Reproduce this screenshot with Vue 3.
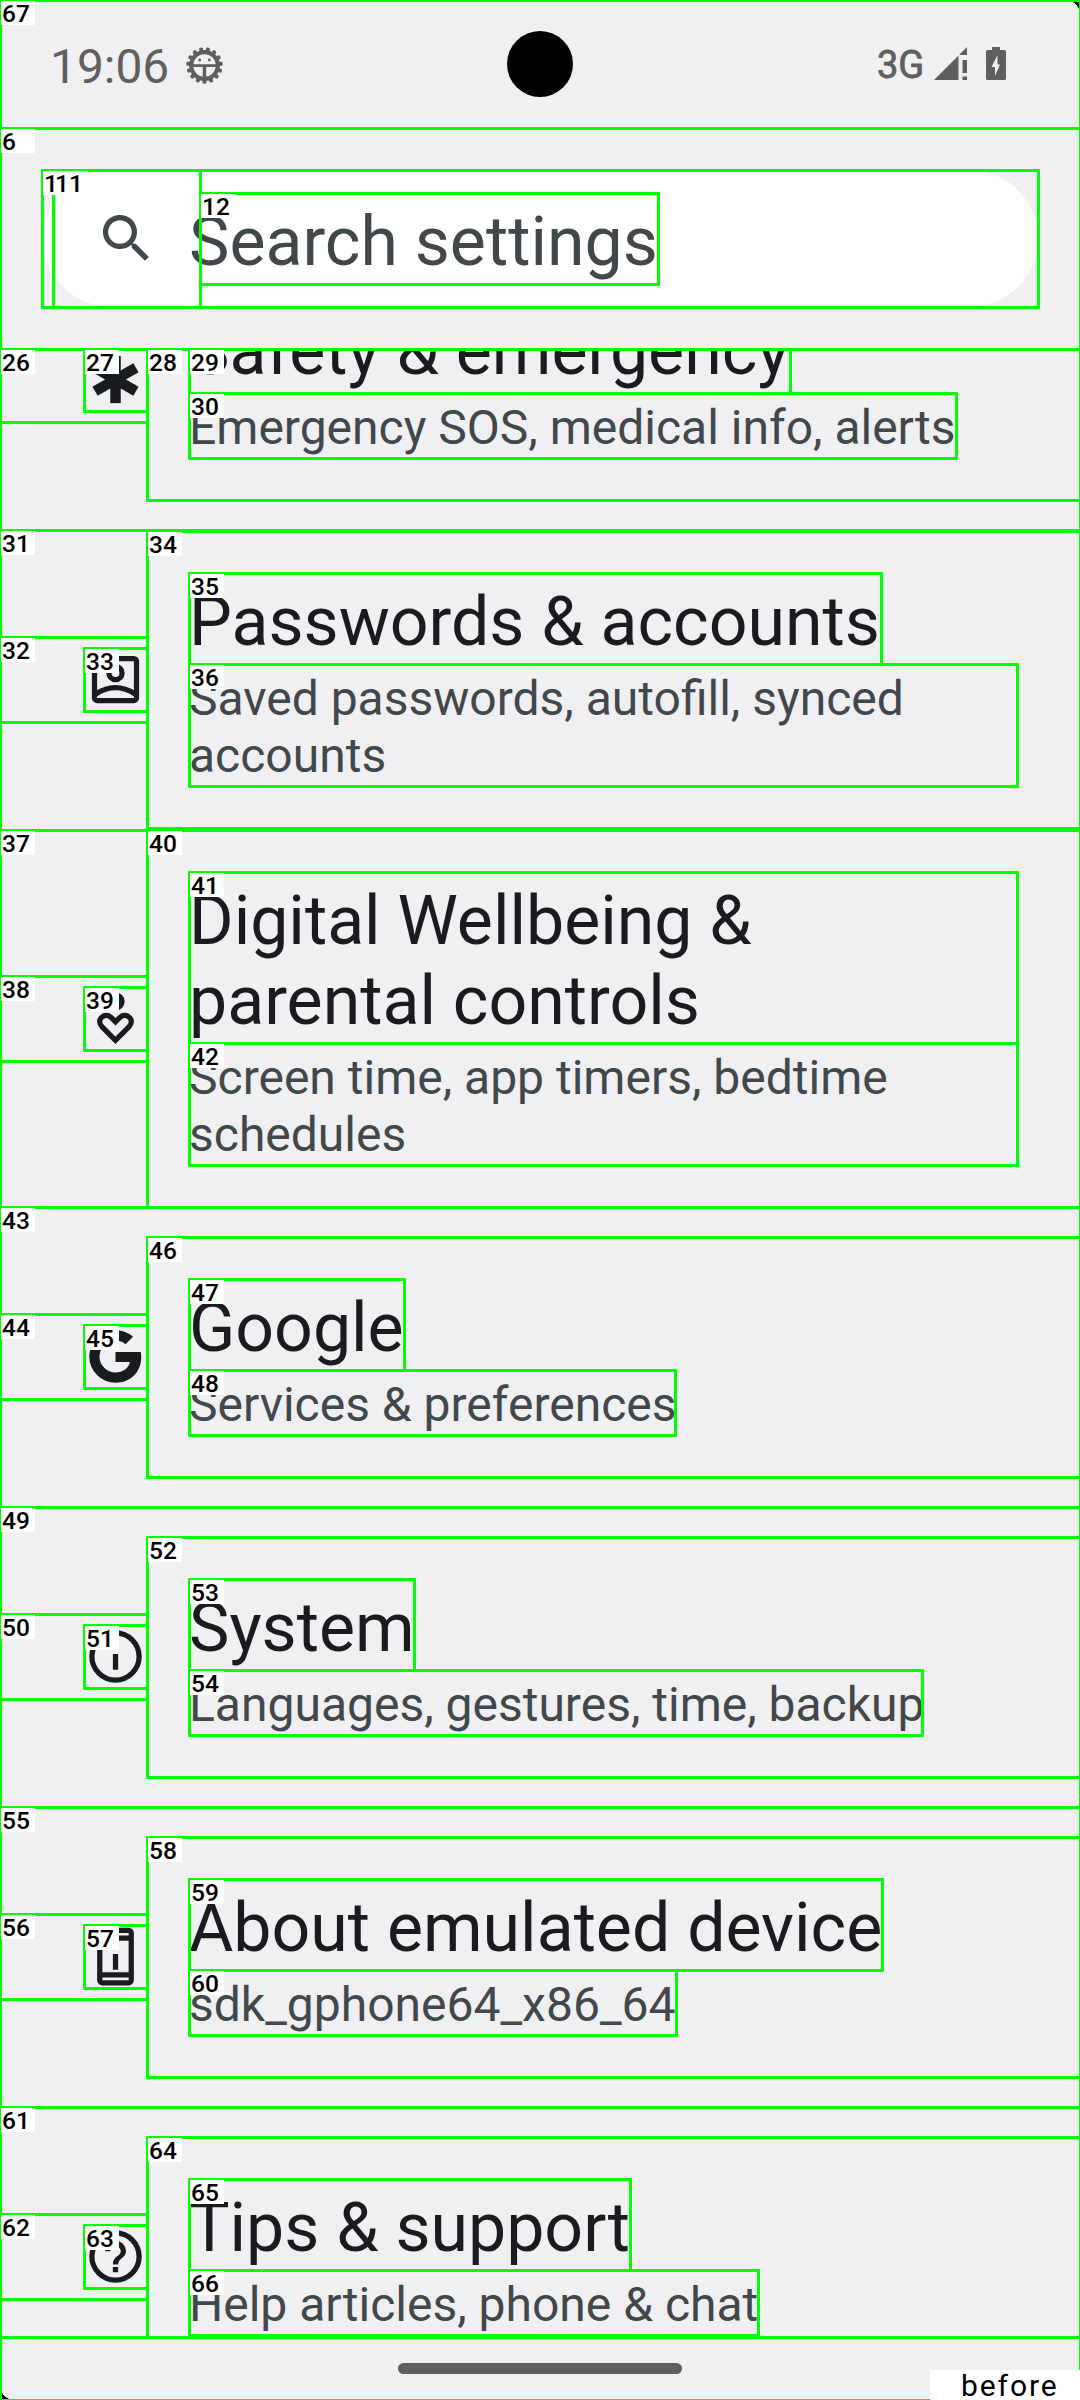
<script setup>
const rows = [
  { size: 'short', icon: 'emergency', title: 'Safety & emergency', summary: 'Emergency SOS, medical info, alerts' },
  { size: 'medium', icon: 'account', title: 'Passwords & accounts', summary: 'Saved passwords, autofill, synced accounts' },
  { size: 'tall', icon: 'wellbeing', title: 'Digital Wellbeing & parental controls', summary: 'Screen time, app timers, bedtime schedules' },
  { size: 'short', icon: 'google', title: 'Google', summary: 'Services & preferences' },
  { size: 'short', icon: 'info', title: 'System', summary: 'Languages, gestures, time, backup' },
  { size: 'short', icon: 'phone', title: 'About emulated device', summary: 'sdk_gphone64_x86_64' },
  { size: 'short', icon: 'help', title: 'Tips & support', summary: 'Help articles, phone & chat' },
]

// Element bounds: [label, left, top, right, bottom]
const marks = [
  ['67', 0, 0, 1080, 128],
  ['6', 0, 128, 1080, 349],
  ['', 42, 170, 1038, 307],
  ['1', 42, 170, 53, 307],
  ['11', 53, 170, 200, 307],
  ['12', 200, 193, 658, 284],
  ['', 0, 349, 1080, 530],
  ['26', 0, 349, 147, 422],
  ['27', 84, 349, 147, 411],
  ['28', 147, 349, 1080, 500],
  ['29', 189, 349, 790, 393],
  ['30', 189, 393, 956, 458],
  ['31', 0, 530, 1080, 830],
  ['32', 0, 637, 147, 722],
  ['33', 84, 648, 147, 711],
  ['34', 147, 531, 1080, 828],
  ['35', 189, 573, 881, 664],
  ['36', 189, 664, 1017, 786],
  ['37', 0, 830, 1080, 1207],
  ['38', 0, 976, 147, 1061],
  ['39', 84, 987, 147, 1050],
  ['40', 147, 830, 1080, 1207],
  ['41', 189, 872, 1017, 1043],
  ['42', 189, 1043, 1017, 1165],
]
const repeated = [
  [43, 1207, 404, 675],
  [49, 1507, 414, 922],
  [55, 1807, 882, 676],
  [61, 2107, 630, 758],
]
for (const [n, y, titleRight, summaryRight] of repeated) {
  const end = Math.min(y + 300, 2337)
  marks.push(
    [String(n), 0, y, 1080, end],
    [String(n + 1), 0, y + 107, 147, y + 192],
    [String(n + 2), 84, y + 118, 147, y + 181],
    [String(n + 3), 147, y + 30, 1080, Math.min(y + 270, 2337)],
    [String(n + 4), 189, y + 72, titleRight, y + 163],
    [String(n + 5), 189, y + 163, summaryRight, y + 228],
  )
}
const boxStyle = ([, l, t, r, b]) => ({
  left: l - 1 + 'px', top: t - 1 + 'px', width: r - l + 3 + 'px', height: b - t + 3 + 'px',
})
const tagStyle = ([, l, t]) => ({ left: l + 1 + 'px', top: t + 1 + 'px' })
const teeth = Array.from({ length: 15 }, (_, i) => i * 24 + 12)
</script>

<template>
  <main class="screen">
    <header class="status">
      <div class="left">
        <span class="clock">19:06</span>
        <svg class="bug" viewBox="-18.5 -18.5 37 37">
          <rect v-for="a in teeth" :key="a" x="-2" y="-18.3" width="4" height="6" rx="1.6" :transform="`rotate(${a})`" />
          <circle r="13.300" fill="none" stroke="#5f5f5f" stroke-width="4.200" />
          <path d="M-13-1.200h26v2.800h-26zM-1.700 0h3.400v14h-3.400z" />
          <circle cx="-4.800" cy="-5.500" r="1.400" /><circle cx="4.800" cy="-5.500" r="1.400" />
        </svg>
      </div>
      <div class="right">
        <span class="net">3G</span>
        <svg class="signal" viewBox="0 0 33 33"><path d="M0 33L24.500 8.500V33zM25 8L33 0V8zM28.500 13H33V26H28.500zM28.500 29.500H33V33H28.500z" /></svg>
        <svg class="battery" viewBox="0 0 20 33"><path fill-rule="evenodd" d="M6 0h8v3h4.500q1.500 0 1.500 1.500v27q0 1.500-1.500 1.500h-17q-1.500 0-1.500-1.500v-27q0-1.500 1.500-1.500H6zM11.500 8L5.500 20H9V29L14 17.500H11.500z" /></svg>
      </div>
      <i class="camera"></i>
    </header>

    <section class="searchwrap">
      <div class="search">
        <svg viewBox="0 0 24 24"><path d="M15.500 14h-.79l-.28-.27A6.470 6.470 0 0 0 16 9.500 6.500 6.500 0 1 0 9.500 16c1.610 0 3.090-.59 4.230-1.570l.27.28v.79l5 4.990L20.490 19l-4.990-5zm-6 0C7.010 14 5 11.990 5 9.500S7.010 5 9.500 5 14 7.010 14 9.500 11.990 14 9.500 14z" /></svg>
        <span>Search settings</span>
      </div>
    </section>

    <section class="list">
      <article v-for="r in rows" :key="r.title" class="row" :class="r.size">
        <svg class="icon" viewBox="0 0 24 24">
          <g v-if="r.icon === 'emergency'">
            <rect v-for="a in [0, 60, 120]" :key="a" x="10" y="3" width="4" height="18" :transform="`rotate(${a} 12 12)`" />
          </g>
          <g v-else-if="r.icon === 'account'" fill="none" stroke="#191c1e" stroke-width="2">
            <rect x="4" y="4" width="16" height="16" rx="1" />
            <circle cx="12" cy="9.500" r="2.500" />
            <path d="M4.500 17.500Q12 12.700 19.500 17.500" />
          </g>
          <g v-else-if="r.icon === 'wellbeing'">
            <circle cx="12" cy="5.500" r="3.500" />
            <path fill="none" stroke="#191c1e" stroke-width="2" d="M12 20.300L6.900 15.200C5.700 14 5.700 12.400 6.800 11.500C7.800 10.600 9.200 10.600 10.200 11.500L12 13.300L13.800 11.500C14.800 10.600 16.200 10.600 17.200 11.500C18.300 12.400 18.300 14 17.100 15.200z" />
          </g>
          <path v-else-if="r.icon === 'google'" d="M21.600 10.300H12v3.800h5.500c-.5 2.400-2.600 4-5.500 4a6.100 6.100 0 0 1 0-12.200c1.500 0 2.800.5 3.800 1.400l2.900-2.800C16.900 2.900 14.600 2 12 2a10 10 0 1 0 0 20c5.800 0 9.800-4.100 9.800-9.800 0-.6-.1-1.300-.2-1.900z" />
          <path v-else-if="r.icon === 'info'" d="M11 7h2v2h-2zM11 11h2v6h-2zM12 2a10 10 0 1 0 0 20 10 10 0 0 0 0-20zm0 18a8 8 0 1 1 0-16 8 8 0 0 1 0 16z" />
          <path v-else-if="r.icon === 'phone'" fill-rule="evenodd" d="M7 1h10a2 2 0 0 1 2 2v18a2 2 0 0 1-2 2H7a2 2 0 0 1-2-2V3a2 2 0 0 1 2-2zM7 3v1h10V3zM7 6v12h10V6zM7 20v1h10v-1zM11 7h2v2h-2zM11 11h2v6h-2z" />
          <path v-else d="M11 16h2v2h-2zM12 2a10 10 0 1 0 0 20 10 10 0 0 0 0-20zm0 18a8 8 0 1 1 0-16 8 8 0 0 1 0 16zM12 6a4 4 0 0 0-4 4h2a2 2 0 1 1 4 0c0 2-3 1.750-3 5h2c0-2.250 3-2.500 3-5a4 4 0 0 0-4-4z" />
        </svg>
        <div class="text">
          <div class="title">{{ r.title }}</div>
          <div class="summary">{{ r.summary }}</div>
        </div>
      </article>
    </section>

    <footer class="nav"><i class="handle"></i></footer>

    <i class="corner top"></i>
    <i class="corner bottom"></i>

    <div class="overlay">
      <i class="edge"></i>
      <i v-for="(m, i) in marks" :key="'b' + i" class="box" :style="boxStyle(m)"></i>
      <template v-for="(m, i) in marks" :key="'t' + i">
        <b v-if="m[0]" class="tag" :style="tagStyle(m)">{{ m[0] }}</b>
      </template>
      <b class="stage">before</b>
    </div>
  </main>
</template>

<style>
body { margin: 0; }
</style>

<style scoped>
.screen { position: relative; display: flex; flex-direction: column; width: 1080px; height: 2400px; overflow: hidden; background: #f0eff2; font-family: Roboto, sans-serif; color: #191c1e; }
.status { position: relative; flex: none; display: flex; justify-content: space-between; height: 128px; box-sizing: border-box; padding: 0 74px 0 50px; color: #5f5f5f; fill: #5f5f5f; }
.left, .right { display: flex; align-items: flex-start; }
.clock { width: 121px; margin-top: 39px; font-size: 47.900px; line-height: 56px; white-space: nowrap; }
.bug { width: 37px; height: 37px; margin: 47px 0 0 15px; }
.net { width: 57px; margin-top: 43px; font-size: 38px; font-weight: 400; line-height: 44px; -webkit-text-stroke: 0.8px #5f5f5f; }
.signal { width: 33px; height: 33px; margin-top: 47px; }
.battery { width: 20px; height: 33px; margin: 47px 0 0 19px; }
.camera { position: absolute; left: 507px; top: 31px; width: 66px; height: 66px; border-radius: 50%; background: #000; }
.searchwrap { flex: none; height: 221px; box-sizing: border-box; padding: 42px 42px 0 43px; }
.search { display: flex; align-items: center; height: 137px; box-sizing: border-box; padding-left: 52px; border-radius: 69px; background: #fff; color: #40484c; fill: #40484c; font-size: 68px; line-height: 80px; white-space: nowrap; }
.search svg { flex: none; width: 63px; height: 63px; margin-right: 31px; }
.search span { margin-top: 7px; }
.list { flex: none; height: 1988px; overflow: hidden; display: flex; flex-direction: column; }
.row { flex: none; display: flex; align-items: flex-start; height: 300px; box-sizing: border-box; padding: 81px 76px 0 84px; }
.row:first-child { margin-top: -119px; }
.row.medium { padding-top: 52px; }
.row.tall { height: 377px; padding-top: 51px; }
.icon { flex: none; width: 63px; height: 63px; margin-top: 37px; fill: #191c1e; }
.medium .icon { margin-top: 66px; }
.tall .icon { margin-top: 106px; }
.text { flex: 1; margin-left: 42px; }
.title { font-size: 68px; line-height: 80px; }
.summary { margin-top: 8px; font-size: 48px; line-height: 57px; color: #40484c; }
.nav { flex: 1; display: flex; justify-content: center; align-items: flex-start; }
.handle { width: 284px; height: 11px; margin-top: 26px; border-radius: 6px; background: #5f5f5f; }
.corner { position: absolute; width: 14px; height: 14px; }
.corner.top { right: 0; top: 0; background: radial-gradient(circle at 0 100%, transparent 13.500px, #000 14px); }
.corner.bottom { left: 0; bottom: 0; background: radial-gradient(circle at 100% 0, transparent 13.500px, #000 14px); }
.overlay { position: absolute; inset: 0; overflow: hidden; }
.box { position: absolute; box-sizing: border-box; border: 3px solid #0f0; border-radius: 1px; }
.edge { position: absolute; inset: 0; box-sizing: border-box; border: solid #0f0; border-width: 2px 1px 1px 2px; }
.tag { position: absolute; width: 34px; height: 24px; box-sizing: border-box; padding-left: 1px; background: #fff; color: #000; font-size: 24.500px; font-weight: 500; line-height: 25px; white-space: nowrap; }
.stage { position: absolute; left: 930px; top: 2370px; width: 150px; height: 30px; box-sizing: border-box; padding-left: 31px; background: #fff; color: #000; font-size: 30px; font-weight: 400; letter-spacing: 1.900px; line-height: 31px; }
</style>
